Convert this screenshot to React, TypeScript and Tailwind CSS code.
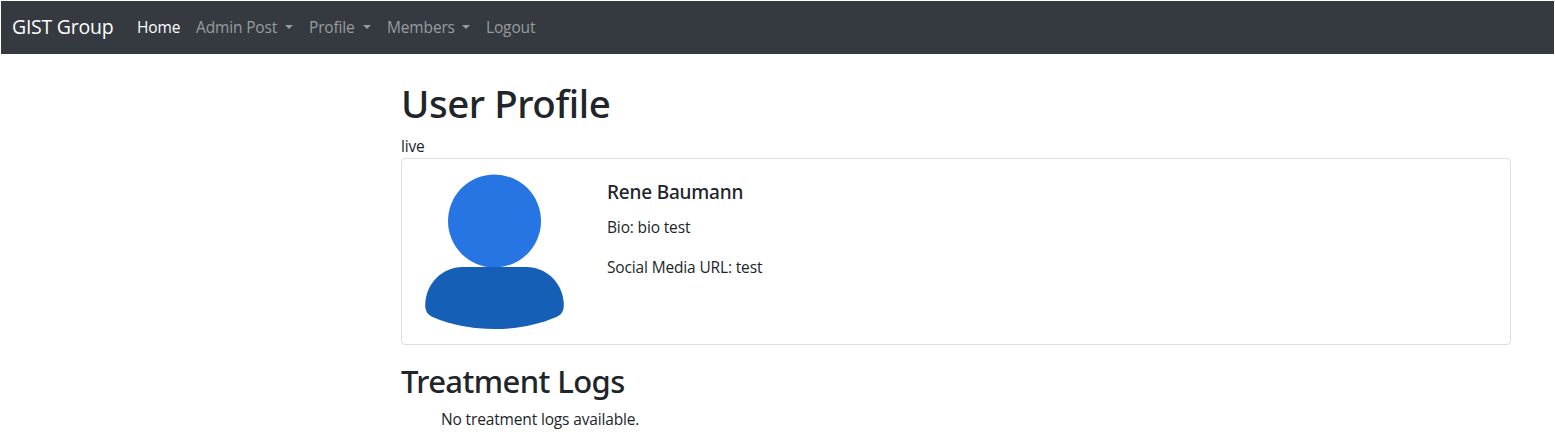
const navItems = [
  { label: 'Home', width: 'w-[59px]', active: true, menu: false },
  { label: 'Admin Post', width: 'w-[113px]', active: false, menu: true },
  { label: 'Profile', width: 'w-[78px]', active: false, menu: true },
  { label: 'Members', width: 'w-[99px]', active: false, menu: true },
  { label: 'Logout', width: 'w-[66px]', active: false, menu: false },
];

function Navbar() {
  return (
    <nav className="mx-px mt-px flex h-[53px] items-center bg-[#343a40] pb-px pl-[11px]">
      <a className="w-[117px] whitespace-nowrap text-[19.5px] leading-[30px] tracking-[-0.25px] text-white">GIST Group</a>
      <ul className="flex">
        {navItems.map((item) => (
          <li
            key={item.label}
            className={`${item.width} ${item.active ? 'text-white' : 'text-[#999c9f]'} flex items-center justify-between whitespace-nowrap px-2 leading-6`}
          >
            <span>{item.label}</span>
            {item.menu && <span className="mb-px border-x-4 border-t-4 border-x-transparent border-t-current" />}
          </li>
        ))}
      </ul>
    </nav>
  );
}

function Avatar() {
  return (
    <svg className="block h-[156px] w-[140px]" viewBox="-0.5 -0.5 140 156" aria-hidden="true">
      <circle cx="70" cy="46.5" r="46.5" fill="#2675e2" />
      <path
        d="M38 92.5H102C122 92.5 139.300 109 139.300 131C139.300 136 137 140 132.500 142.300C94 158.700 46 158.700 7.500 142.300C3 140 .7 136 .7 131C.7 109 18 92.500 38 92.500Z"
        fill="#155fb6"
      />
    </svg>
  );
}

export default function App() {
  return (
    <div className="h-[434px] overflow-hidden bg-white font-['Open_Sans',sans-serif] text-[15.5px] leading-6 tracking-[-0.15px] text-[#212529]">
      <Navbar />
      <main className="ml-[401px] w-[1110px] pt-[25px]">
        <h1 className="mb-2 font-['Noto_Sans',sans-serif] text-[38.5px] font-medium leading-[48px] tracking-[-0.45px]">User Profile</h1>
        <p className="-mt-px h-6">live</p>
        <section className="flex h-[187px] rounded-[4px] border border-[#dfdfdf] pl-[22px] pt-[15px]">
          <Avatar />
          <div className="ml-[43px] pt-[6px]">
            <h5 className="mb-[11px] font-['Noto_Sans',sans-serif] text-[19px] font-medium leading-6 tracking-[-0.2px]">Rene Baumann</h5>
            <p className="mb-4">Bio: bio test</p>
            <p>Social Media URL: test</p>
          </div>
        </section>
        <h2 className="mt-[17px] font-['Noto_Sans',sans-serif] text-[31px] font-medium leading-[38px] tracking-[-0.6px]">Treatment Logs</h2>
        <p className="ml-10 mt-[7px]">No treatment logs available.</p>
      </main>
    </div>
  );
}
